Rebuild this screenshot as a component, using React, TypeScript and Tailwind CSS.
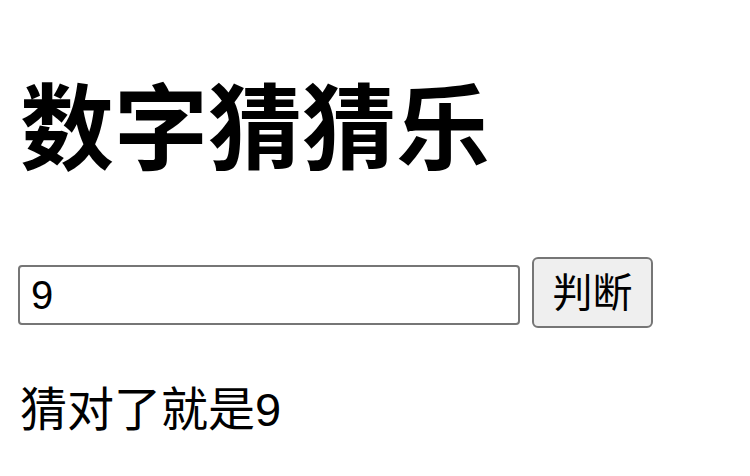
import { useState } from "react";

const font = { fontFamily: '"Liberation Sans", "Noto Sans CJK SC", sans-serif' };

export default function App() {
  const [value, setValue] = useState("9");
  const [result, setResult] = useState("猜对了就是9");

  const handleCheck = () => {
    setResult(value === "9" ? "猜对了就是9" : "猜错了");
  };

  return (
    <div className="min-h-screen bg-white text-black pl-[18px] pt-[84px]" style={font}>
      <h1 className="pl-[2px] text-[94px] font-bold leading-none">数字猜猜乐</h1>
      <div className="mt-[79px] flex items-start gap-[12px]">
        <input
          value={value}
          onChange={(e) => setValue(e.target.value)}
          className="mt-[8px] h-[60px] w-[502px] rounded-[4px] border-2 border-[#767676] bg-white px-[11px] text-[40px] outline-none"
        />
        <button
          onClick={handleCheck}
          className="h-[71px] w-[121px] rounded-[6px] border-2 border-[#767676] bg-[#efefef] text-[40px] leading-none"
        >
          判断
        </button>
      </div>
      <p className="mt-[58px] pl-[2px] text-[47px] leading-none">{result}</p>
    </div>
  );
}
